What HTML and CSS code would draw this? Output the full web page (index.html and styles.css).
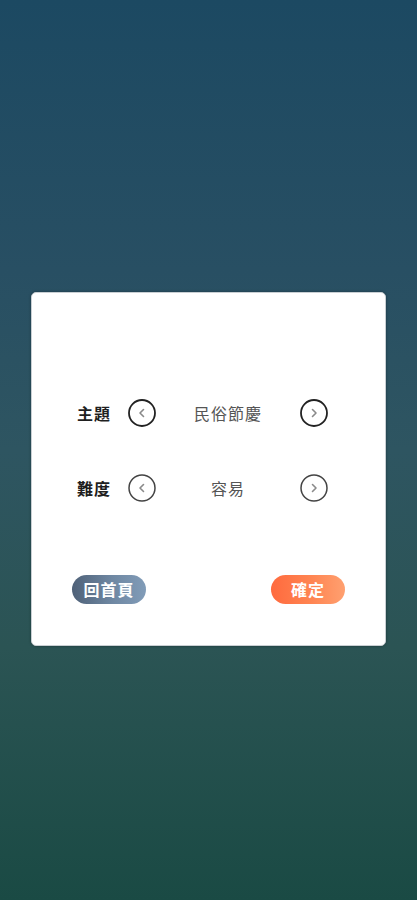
FILE: index.html
```html
<!DOCTYPE html>
<html lang="zh-Hant">
<head>
<meta charset="utf-8">
<link rel="stylesheet" href="styles.css">
</head>
<body>
<div class="screen">
  <div class="card">
    <div class="row">
      <span class="label">主題</span>
      <span class="arrow"><svg viewBox="0 0 28 28" width="28" height="28"><circle cx="14" cy="14" r="13" fill="none" stroke="#222" stroke-width="1.8"/><path d="M15.5 10.5 L12 14 L15.5 17.5" fill="none" stroke="#8a8a8a" stroke-width="1.6" stroke-linecap="round" stroke-linejoin="round"/></svg></span>
      <span class="value">民俗節慶</span>
      <span class="arrow"><svg viewBox="0 0 28 28" width="28" height="28"><circle cx="14" cy="14" r="13" fill="none" stroke="#222" stroke-width="1.8"/><path d="M12.5 10.5 L16 14 L12.5 17.5" fill="none" stroke="#8a8a8a" stroke-width="1.6" stroke-linecap="round" stroke-linejoin="round"/></svg></span>
    </div>
    <div class="row">
      <span class="label">難度</span>
      <span class="arrow"><svg viewBox="0 0 28 28" width="28" height="28"><circle cx="14" cy="14" r="13" fill="none" stroke="#444" stroke-width="1.5"/><path d="M15.5 10.5 L12 14 L15.5 17.5" fill="none" stroke="#8a8a8a" stroke-width="1.6" stroke-linecap="round" stroke-linejoin="round"/></svg></span>
      <span class="value">容易</span>
      <span class="arrow"><svg viewBox="0 0 28 28" width="28" height="28"><circle cx="14" cy="14" r="13" fill="none" stroke="#444" stroke-width="1.5"/><path d="M12.5 10.5 L16 14 L12.5 17.5" fill="none" stroke="#8a8a8a" stroke-width="1.6" stroke-linecap="round" stroke-linejoin="round"/></svg></span>
    </div>
    <div class="actions">
      <button class="btn btn-home">回首頁</button>
      <button class="btn btn-ok">確定</button>
    </div>
  </div>
</div>
</body>
</html>
```
FILE: styles.css
```css
* { box-sizing: border-box; }
html, body { margin: 0; padding: 0; }
body {
  width: 417px;
  height: 900px;
  font-family: "Noto Sans CJK TC", "Noto Sans", sans-serif;
  background: linear-gradient(180deg, #1c4962 0%, #284f63 30%, #2e5561 50%, #2b5454 72%, #1a4a44 100%);
  overflow: hidden;
}
.screen {
  height: 900px;
  padding-top: 292px;
  display: flex;
  justify-content: center;
  align-items: flex-start;
}
.card {
  width: 355px;
  height: 354px;
  background: #fff;
  border-radius: 5px;
  border: 1px solid #c9cfd3;
  box-shadow: 0 0 3px rgba(0,0,0,0.35);
  padding: 106px 0 0 0;
  display: flex;
  flex-direction: column;
}
.row {
  display: grid;
  grid-template-columns: 51px 28px 144px 28px;
  align-items: center;
  height: 28px;
  padding-left: 45px;
}
.row + .row { margin-top: 47px; }
.label {
  font-size: 16px;
  font-weight: 700;
  color: #1f1f1f;
  letter-spacing: 1px;
  line-height: 28px;
}
.value {
  font-size: 16px;
  color: #555;
  text-align: center;
  letter-spacing: 1px;
  line-height: 28px;
}
.arrow { display: block; width: 28px; height: 28px; }
.arrow svg { display: block; }
.actions {
  margin-top: 73px;
  display: flex;
  justify-content: space-between;
  padding: 0 40px;
}
.btn {
  border: none;
  height: 29px;
  border-radius: 15px;
  color: #fff;
  font-family: "Noto Sans CJK TC", "Noto Sans", sans-serif;
  font-size: 16px;
  font-weight: 700;
  letter-spacing: 1px;
  padding: 0;
  line-height: 29px;
}
.btn-home {
  width: 74px;
  background: linear-gradient(90deg, #4f6178 0%, #6f88a3 55%, #819cb8 100%);
}
.btn-ok {
  width: 74px;
  background: linear-gradient(90deg, #ff6a3e 0%, #ff8552 55%, #ffa070 100%);
}
```
